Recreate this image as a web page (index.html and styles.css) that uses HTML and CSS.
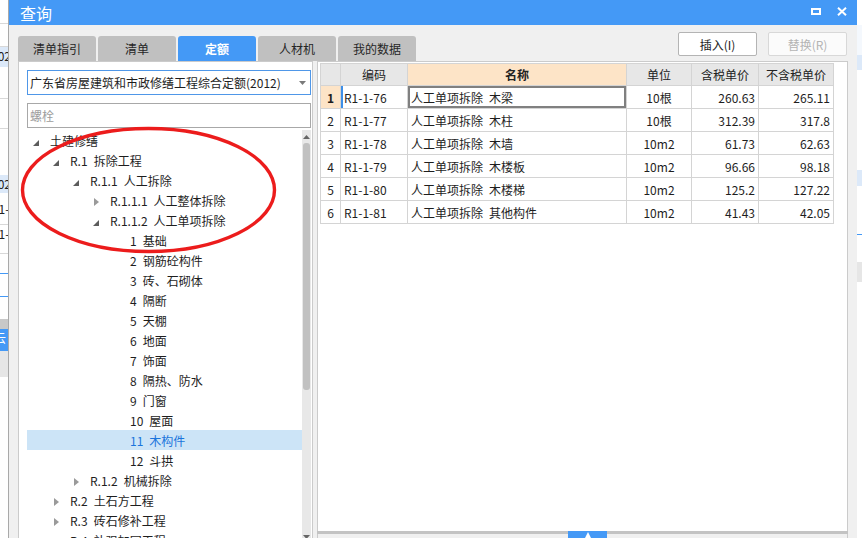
FILE: index.html
```html
<!DOCTYPE html>
<html lang="zh-CN">
<head>
<meta charset="utf-8">
<title>查询</title>
<link rel="stylesheet" href="styles.css">
</head>
<body>
<div class="screen">
  <div class="bg-strip bg-left">
    <div class="bgc h23"></div>
    <div class="bgl"></div>
    <div class="bgc h22"></div>
    <div class="bgl"></div>
    <div class="bgc h20 bg-lb"><span class="clip">202</span></div>
    <div class="bgc h31"></div>
    <div class="bgl"></div>
    <div class="bgc h29"></div>
    <div class="bgl"></div>
    <div class="bgc h46"></div>
    <div class="bgc h18 bg-lb"><span class="clip">202</span></div>
    <div class="bgc h7"></div>
    <div class="bgc h24"><span class="clip">R1-</span></div>
    <div class="bgl"></div>
    <div class="bgc h28"><span class="clip">R1-</span></div>
    <div class="bgl"></div>
    <div class="bgc h19"></div>
    <div class="bgl bgl-blue"></div>
    <div class="bgc h22"></div>
    <div class="bgl bgl-blue"></div>
    <div class="bgc h22"></div>
    <div class="bgc h10 bg-gray"></div>
    <div class="bgc h22 bg-blue"><span class="clip clip-w">云</span></div>
    <div class="bgc h26 bg-lgray"></div>
    <div class="bgc fill"></div>
  </div>

  <div class="dialog">
    <div class="titlebar">
      <span class="title">查询</span>
      <div class="win-ctrls">
        <span class="ctrl-max"></span>
        <svg class="ctrl-close" width="10" height="9" viewBox="0 0 10 9"><path d="M1 0.8 L9 8.2 M9 0.8 L1 8.2" stroke="#fff" stroke-width="2" fill="none"/></svg>
      </div>
    </div>

    <div class="toolbar">
      <div class="tabs">
        <div class="tab">清单指引</div>
        <div class="tab">清单</div>
        <div class="tab tab-active">定额</div>
        <div class="tab">人材机</div>
        <div class="tab">我的数据</div>
      </div>
      <div class="actions">
        <button class="btn">插入(I)</button>
        <button class="btn btn-disabled">替换(R)</button>
      </div>
    </div>

    <div class="main">
      <div class="left-panel">
        <div class="select">
          <span>广东省房屋建筑和市政修缮工程综合定额(2012)</span>
          <svg class="select-arrow" width="7" height="4" viewBox="0 0 7 4"><polygon points="0,0 7,0 3.5,4" fill="#7a7a7a"/></svg>
        </div>
        <div class="search">螺栓</div>
        <div class="tree-wrap">
          <div class="tree">
            <div class="row lv0"><span class="tg"><svg class="tri-open" width="6" height="6" viewBox="0 0 6 6"><polygon points="6,0 6,6 0,6"/></svg></span>土建修缮</div>
            <div class="row lv1"><span class="tg"><svg class="tri-open" width="6" height="6" viewBox="0 0 6 6"><polygon points="6,0 6,6 0,6"/></svg></span><span class="code">R.1</span>拆除工程</div>
            <div class="row lv2"><span class="tg"><svg class="tri-open" width="6" height="6" viewBox="0 0 6 6"><polygon points="6,0 6,6 0,6"/></svg></span><span class="code">R.1.1</span>人工拆除</div>
            <div class="row lv3"><span class="tg"><svg class="tri-closed" width="5" height="8" viewBox="0 0 5 8"><polygon points="0,0 5,4 0,8"/></svg></span><span class="code">R.1.1.1</span>人工整体拆除</div>
            <div class="row lv3"><span class="tg"><svg class="tri-open" width="6" height="6" viewBox="0 0 6 6"><polygon points="6,0 6,6 0,6"/></svg></span><span class="code">R.1.1.2</span>人工单项拆除</div>
            <div class="row lv4"><span class="tg"></span><span class="code">1</span>基础</div>
            <div class="row lv4"><span class="tg"></span><span class="code">2</span>钢筋砼构件</div>
            <div class="row lv4"><span class="tg"></span><span class="code">3</span>砖、石砌体</div>
            <div class="row lv4"><span class="tg"></span><span class="code">4</span>隔断</div>
            <div class="row lv4"><span class="tg"></span><span class="code">5</span>天棚</div>
            <div class="row lv4"><span class="tg"></span><span class="code">6</span>地面</div>
            <div class="row lv4"><span class="tg"></span><span class="code">7</span>饰面</div>
            <div class="row lv4"><span class="tg"></span><span class="code">8</span>隔热、防水</div>
            <div class="row lv4"><span class="tg"></span><span class="code">9</span>门窗</div>
            <div class="row lv4"><span class="tg"></span><span class="code">10</span>屋面</div>
            <div class="row lv4 sel"><span class="tg"></span><span class="code">11</span>木构件</div>
            <div class="row lv4"><span class="tg"></span><span class="code">12</span>斗拱</div>
            <div class="row lv2"><span class="tg"><svg class="tri-closed" width="5" height="8" viewBox="0 0 5 8"><polygon points="0,0 5,4 0,8"/></svg></span><span class="code">R.1.2</span>机械拆除</div>
            <div class="row lv1"><span class="tg"><svg class="tri-closed" width="5" height="8" viewBox="0 0 5 8"><polygon points="0,0 5,4 0,8"/></svg></span><span class="code">R.2</span>土石方工程</div>
            <div class="row lv1"><span class="tg"><svg class="tri-closed" width="5" height="8" viewBox="0 0 5 8"><polygon points="0,0 5,4 0,8"/></svg></span><span class="code">R.3</span>砖石修补工程</div>
            <div class="row lv1"><span class="tg"><svg class="tri-closed" width="5" height="8" viewBox="0 0 5 8"><polygon points="0,0 5,4 0,8"/></svg></span><span class="code">R.4</span>补强加固工程</div>
          </div>
          <div class="vscroll">
            <svg class="sc-arrow" width="7" height="4" viewBox="0 0 7 4"><polygon points="0,4 7,4 3.5,0" fill="#666"/></svg>
            <div class="sc-thumb"></div>
            <div class="sc-space"></div>
            <svg class="sc-arrow" width="7" height="4" viewBox="0 0 7 4"><polygon points="0,0 7,0 3.5,4" fill="#666"/></svg>
          </div>
        </div>
      </div>

      <div class="right-col">
        <div class="grid-panel">
          <table class="grid">
            <colgroup>
              <col class="w-rn"><col class="w-code"><col class="w-name"><col class="w-unit"><col class="w-p1"><col class="w-p2">
            </colgroup>
            <thead>
              <tr>
                <th></th>
                <th>编码</th>
                <th class="th-active">名称</th>
                <th>单位</th>
                <th>含税单价</th>
                <th>不含税单价</th>
              </tr>
            </thead>
            <tbody>
              <tr>
                <td class="c-rn rn-sel">1</td>
                <td class="c-code code-sel">R1-1-76</td>
                <td class="c-name name-focus">人工单项拆除&ensp;木梁</td>
                <td class="c-unit">10根</td>
                <td class="c-num">260.63</td>
                <td class="c-num">265.11</td>
              </tr>
              <tr>
                <td class="c-rn">2</td>
                <td class="c-code">R1-1-77</td>
                <td class="c-name">人工单项拆除&ensp;木柱</td>
                <td class="c-unit">10根</td>
                <td class="c-num">312.39</td>
                <td class="c-num">317.8</td>
              </tr>
              <tr>
                <td class="c-rn">3</td>
                <td class="c-code">R1-1-78</td>
                <td class="c-name">人工单项拆除&ensp;木墙</td>
                <td class="c-unit">10m2</td>
                <td class="c-num">61.73</td>
                <td class="c-num">62.63</td>
              </tr>
              <tr>
                <td class="c-rn">4</td>
                <td class="c-code">R1-1-79</td>
                <td class="c-name">人工单项拆除&ensp;木楼板</td>
                <td class="c-unit">10m2</td>
                <td class="c-num">96.66</td>
                <td class="c-num">98.18</td>
              </tr>
              <tr>
                <td class="c-rn">5</td>
                <td class="c-code">R1-1-80</td>
                <td class="c-name">人工单项拆除&ensp;木楼梯</td>
                <td class="c-unit">10m2</td>
                <td class="c-num">125.2</td>
                <td class="c-num">127.22</td>
              </tr>
              <tr>
                <td class="c-rn">6</td>
                <td class="c-code">R1-1-81</td>
                <td class="c-name">人工单项拆除&ensp;其他构件</td>
                <td class="c-unit">10m2</td>
                <td class="c-num">41.43</td>
                <td class="c-num">42.05</td>
              </tr>
            </tbody>
          </table>
        </div>
        <div class="splitter">
          <span class="split-handle"><svg width="6" height="6" viewBox="0 0 6 6"><polygon points="0,6 6,6 3,0" fill="#fff"/></svg></span>
        </div>
        <div class="bottom-area"></div>
      </div>
    </div>
  </div>

  <div class="bg-strip bg-right">
    <div class="bgc h25"></div>
    <div class="bgc h30 bg-vlb"></div>
    <div class="bgc h15 bg-lb"></div>
    <div class="bgc h100"></div>
    <div class="bgc h16 bg-lb"></div>
    <div class="bgc h48"></div>
    <div class="bgl bgl-blue"></div>
    <div class="bgc h27"></div>
    <div class="bgc h20 bg-lgray"></div>
    <div class="bgc fill"></div>
  </div>
</div>

<svg class="annotation" width="862" height="538" viewBox="0 0 862 538">
  <ellipse cx="148.5" cy="190" rx="126" ry="61.5" fill="none" stroke="#ec1c1c" stroke-width="3.4"/>
</svg>
</body>
</html>
```

FILE: styles.css
```css
* {
  box-sizing: border-box;
}

html,
body {
  margin: 0;
  padding: 0;
}

body {
  width: 862px;
  height: 538px;
  overflow: hidden;
  position: relative;
  background: #fff;
  font-family: "Noto Sans CJK SC", "Noto Sans", sans-serif;
  font-size: 12px;
  color: #1e1e1e;
}

.screen {
  display: flex;
  width: 862px;
  height: 538px;
  overflow: hidden;
}

/* ---------- background application strips ---------- */
.bg-strip {
  flex: none;
  display: flex;
  flex-direction: column;
  overflow: hidden;
  background: #fff;
}

.bg-left {
  width: 8px;
}

.bg-right {
  width: 5px;
}

.bgc {
  flex: none;
  overflow: hidden;
  white-space: nowrap;
  line-height: 18px;
  font-size: 12px;
  color: #222;
}

.bgl {
  flex: none;
  height: 1px;
  background: #d8d8d8;
}

.bgl-blue {
  background: #4499f6;
}

.clip {
  display: inline-block;
  margin-left: -9px;
}

.clip-w {
  color: #fff;
  margin-left: -6px;
}

.h7 { height: 7px; }
.h10 { height: 10px; }
.h15 { height: 15px; }
.h16 { height: 16px; }
.h18 { height: 18px; }
.h19 { height: 19px; }
.h20 { height: 20px; }
.h22 { height: 22px; }
.h23 { height: 23px; }
.h24 { height: 24px; }
.h25 { height: 25px; }
.h26 { height: 26px; }
.h27 { height: 27px; }
.h28 { height: 28px; }
.h29 { height: 29px; }
.h30 { height: 30px; }
.h31 { height: 31px; }
.h46 { height: 46px; }
.h48 { height: 48px; }
.h100 { height: 100px; }

.fill {
  flex: 1;
}

.bg-lb {
  background: #dce9f9;
}

.bg-vlb {
  background: #f4f8fd;
}

.bg-gray {
  background: #c8c8c8;
}

.bg-lgray {
  background: #e6e6e6;
}

.bg-blue {
  background: #4499f6;
}

/* ---------- dialog ---------- */
.dialog {
  width: 849px;
  flex: none;
  border-left: 1px solid #a9a9a9;
  background: #f0f0f0;
  display: flex;
  flex-direction: column;
}

.titlebar {
  height: 25px;
  flex: none;
  background: #4499f6;
  color: #fff;
  display: flex;
  align-items: center;
  justify-content: space-between;
  padding: 0 10px 0 11px;
}

.title {
  font-size: 16px;
  line-height: 24px;
}

.win-ctrls {
  display: flex;
  align-items: center;
  gap: 16px;
  margin-top: -2px;
}

.ctrl-max {
  display: block;
  width: 10px;
  height: 7px;
  border: 2px solid #fff;
}

.ctrl-close {
  display: block;
}

.toolbar {
  height: 36px;
  flex: none;
  display: flex;
  justify-content: space-between;
  padding: 0 10px 0 9px;
}

.tabs {
  display: flex;
  gap: 2px;
  align-self: flex-end;
}

.tab {
  width: 78px;
  height: 25px;
  border-radius: 3px 3px 0 0;
  background: #c0c0c0;
  color: #262626;
  font-size: 12px;
  display: flex;
  align-items: center;
  justify-content: center;
}

.tab-active {
  background: #4499f6;
  color: #fff;
  font-weight: bold;
}

.actions {
  display: flex;
  gap: 11px;
  padding-top: 7px;
}

.btn {
  width: 79px;
  height: 24px;
  padding: 0;
  border: 1px solid #b4b4b4;
  border-radius: 2px;
  background: #fff;
  font-family: inherit;
  font-size: 12px;
  color: #222;
}

.btn-disabled {
  color: #b4b4b4;
  border-color: #d8d8d8;
  background: #fbfbfb;
}

/* ---------- main ---------- */
.main {
  flex: 1;
  min-height: 0;
  display: flex;
  gap: 4px;
  padding-left: 9px;
}

.left-panel {
  width: 295px;
  flex: none;
  background: #fff;
  border: 1px solid #cbcbcb;
  border-bottom: none;
  padding: 8px 1px 0 8px;
  display: flex;
  flex-direction: column;
}

.select {
  height: 25px;
  flex: none;
  border: 1px solid #4f97e8;
  display: flex;
  align-items: center;
  justify-content: space-between;
  padding: 0 4px 0 2px;
  white-space: nowrap;
}

.select-arrow {
  display: block;
  flex: none;
}

.search {
  height: 25px;
  flex: none;
  margin-top: 8px;
  border: 1px solid #a8a8a8;
  padding-left: 2px;
  line-height: 23px;
  color: #9c9c9c;
}

.tree-wrap {
  margin-top: 2px;
  height: 412px;
  flex: none;
  display: flex;
}

.tree {
  flex: 1;
  overflow: hidden;
}

.row {
  height: 20px;
  display: flex;
  align-items: center;
  white-space: nowrap;
  color: #1e1e1e;
}

.row.sel {
  background: #cce4f7;
  color: #1a74dc;
}

.lv0 { padding-left: 6px; }
.lv1 { padding-left: 26px; }
.lv2 { padding-left: 46px; }
.lv3 { padding-left: 66px; }
.lv4 { padding-left: 86px; }

.tg {
  width: 17px;
  height: 20px;
  flex: none;
  display: flex;
  align-items: flex-start;
}

.tri-open {
  display: block;
  margin-top: 10px;
  fill: #5c5c5c;
}

.tri-closed {
  display: block;
  margin: 8px 0 0 1px;
  fill: #9a9a9a;
}

.code {
  margin-right: 6px;
}

.vscroll {
  width: 9px;
  flex: none;
  background: #e8e8e8;
  display: flex;
  flex-direction: column;
  align-items: center;
  padding: 5px 0 3px;
}

.sc-arrow {
  display: block;
  flex: none;
}

.sc-thumb {
  width: 7px;
  height: 247px;
  flex: none;
  margin-top: 4px;
  border-radius: 3px;
  background: #c1c1c1;
}

.sc-space {
  flex: 1;
}

/* ---------- right grid ---------- */
.right-col {
  width: 531px;
  flex: none;
  display: flex;
  flex-direction: column;
}

.grid-panel {
  height: 470px;
  flex: none;
  background: #fff;
  border: 1px solid #cbcbcb;
  border-bottom: none;
  padding: 1px 0 0 2px;
}

.grid {
  border-collapse: collapse;
  table-layout: fixed;
  width: 513px;
}

.w-rn { width: 20px; }
.w-code { width: 67px; }
.w-name { width: 219px; }
.w-unit { width: 65px; }
.w-p1 { width: 67px; }
.w-p2 { width: 75px; }

.grid th,
.grid td {
  border: 1px solid #d4d4d4;
  padding: 0 3px;
  white-space: nowrap;
  overflow: hidden;
  font-size: 12px;
}

.grid th {
  height: 22px;
  background: #e7e7e7;
  color: #222;
  font-weight: normal;
  text-align: center;
}

.grid th.th-active {
  background: #fde4c7;
  font-weight: bold;
}

.grid td {
  height: 23px;
  color: #1e1e1e;
}

.c-rn {
  text-align: center;
  padding: 0 !important;
  color: #333;
}

.rn-sel {
  background: #fde4c7;
  font-weight: bold;
}

.c-code,
.c-name {
  text-align: left;
}

.code-sel {
  box-shadow: inset 2px 0 0 #3d8fe8;
}

.name-focus {
  box-shadow: inset 0 0 0 2px #808080;
}

.c-unit {
  text-align: center;
}

.c-num {
  text-align: right;
}

.splitter {
  height: 3px;
  flex: none;
  background: #c3c3c3;
  display: flex;
  align-items: flex-start;
  position: relative;
  z-index: 1;
}

.split-handle {
  margin-left: 251px;
  width: 39px;
  height: 7px;
  flex: none;
  background: #4499f6;
  display: flex;
  justify-content: center;
  align-items: flex-start;
  padding-top: 1px;
}

.split-handle svg {
  display: block;
}

.bottom-area {
  flex: 1;
  background: #f0f0f0;
  border-left: 1px solid #cbcbcb;
  border-right: 1px solid #cbcbcb;
}

/* ---------- annotation ---------- */
.annotation {
  position: absolute;
  left: 0;
  top: 0;
  pointer-events: none;
}
```
